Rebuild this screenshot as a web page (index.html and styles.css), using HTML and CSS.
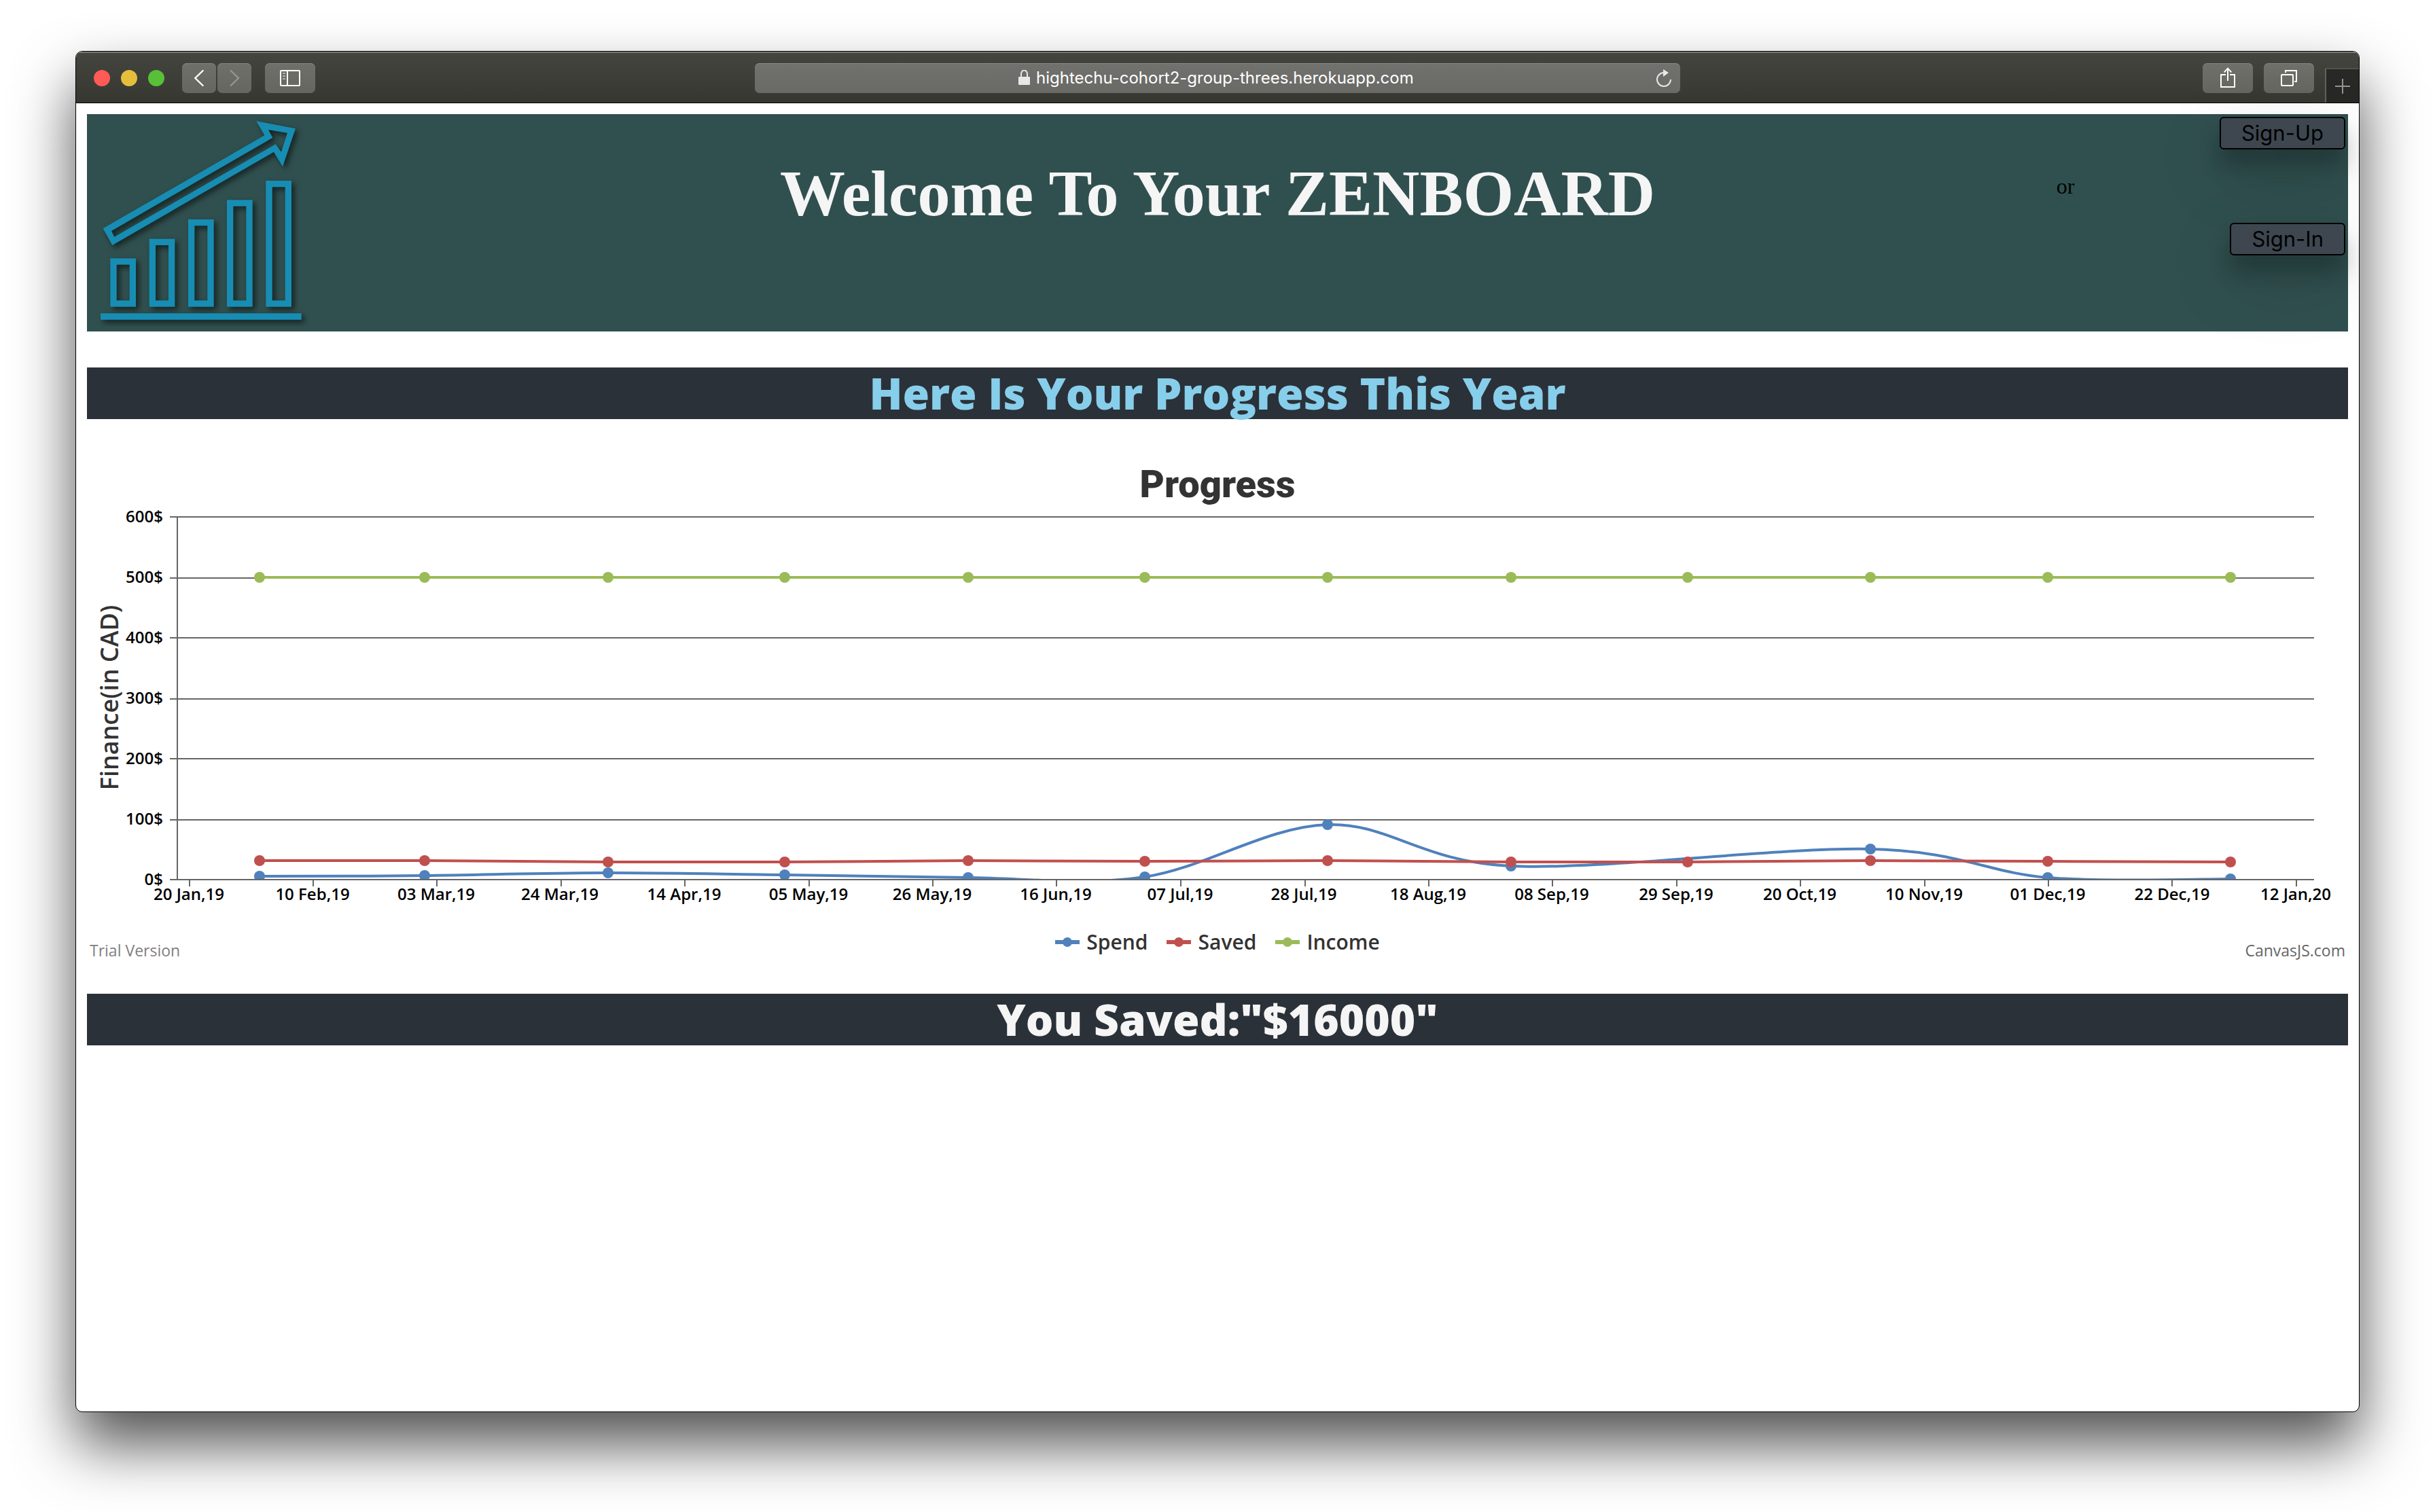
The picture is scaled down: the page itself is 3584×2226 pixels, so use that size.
FILE: index.html
```html
<!DOCTYPE html>
<html lang="en">
<head>
<meta charset="utf-8">
<title>Zenboard</title>
<link rel="stylesheet" href="styles.css">
</head>
<body>
<div class="window">
  <div class="toolbar">
    <div class="tools tools-left">
      <div class="lights">
        <button class="light light-close" aria-label="Close"></button>
        <button class="light light-min" aria-label="Minimise"></button>
        <button class="light light-full" aria-label="Full screen"></button>
      </div>
      <div class="nav">
        <button class="tool tool-nav" aria-label="Back"><svg width="50" height="44" viewBox="504 96 150 132"><path d="M596 129L562 162L596 195" fill="none" stroke="#fff" stroke-width="7" stroke-linecap="round"/></svg></button>
        <button class="tool tool-nav" aria-label="Forward"><svg width="50" height="44" viewBox="660 96 150 132"><path d="M719 129L753 162L719 195" fill="none" stroke="#969691" stroke-width="7" stroke-linecap="round"/></svg></button>
      </div>
      <button class="tool" aria-label="Show sidebar"><svg width="74" height="44" viewBox="870 96 222 132"><rect x="939" y="129" width="84" height="66" rx="3" fill="none" stroke="#fff" stroke-width="6"/><path d="M969 129V195" stroke="#fff" stroke-width="6"/><path d="M948 141H960M948 153H960M948 165H960" stroke="#c8c8c4" stroke-width="5"/></svg></button>
    </div>
    <div class="address">
      <label class="url">
        <svg width="17" height="24" viewBox="0 0 17 24"><path d="M4 12V6A4 5 0 0 1 13 6V12" fill="none" stroke="#e8e8e8" stroke-width="2"/><rect x="0" y="10" width="17" height="12" rx="1" fill="#e8e8e8"/></svg>
        <input class="url-input" type="text" aria-label="Address" value="hightechu-cohort2-group-threes.herokuapp.com">
      </label>
      <button class="reload" aria-label="Reload"><svg width="24" height="26" viewBox="0 0 24 26"><path d="M12 5A10 10 0 1 0 22 15" fill="none" stroke="#e8e8e8" stroke-width="2"/><path d="M11 0L19 5L11 11Z" fill="#e8e8e8"/></svg></button>
    </div>
    <div class="tools tools-right">
      <button class="tool" aria-label="Share"><svg width="74" height="44" viewBox="726 96 222 132"><path d="M828 147H807V201H867V147H846M837 174V120M821 136L837 119L853 136" fill="none" stroke="#fff" stroke-width="6"/></svg></button>
      <button class="tool" aria-label="Show tabs"><svg width="74" height="44" viewBox="996 96 222 132"><rect x="1074" y="147" width="51" height="48" rx="3" fill="none" stroke="#fff" stroke-width="6"/><path d="M1092 138V129H1140V177H1131" fill="none" stroke="#fff" stroke-width="6"/></svg></button>
      <button class="new-tab" aria-label="New tab"><svg width="22" height="22" viewBox="0 0 22 22"><path d="M11 0V22M0 11H22" stroke="#949494" stroke-width="2"/></svg></button>
    </div>
  </div>

  <main class="page">
    <header class="hero">
      <svg class="logo" width="320" height="320" viewBox="84 324 960 960" role="img" aria-label="Rising bar chart">
        <g fill="none" stroke="#178db3" stroke-width="28">
          <rect x="201" y="975" width="85" height="186"/>
          <rect x="373" y="889" width="85" height="272"/>
          <rect x="545" y="803" width="85" height="358"/>
          <rect x="716" y="717" width="85" height="444"/>
          <rect x="888" y="632" width="85" height="529"/>
          <path d="M144 1218H1031"/>
        </g>
        <path fill="#178db3" fill-rule="evenodd" d="M155 829L868 418L832 355L1005 388L948 556L909 491L196 903ZM192 840L205 866L917 457L942 491L969 407L885 393L904 428Z"/>
      </svg>
      <h1 class="hero-title">Welcome To Your ZENBOARD</h1>
      <div class="account">
        <button class="sign">Sign-Up</button>
        <p class="or">or</p>
        <button class="sign">Sign-In</button>
      </div>
    </header>

    <h2 class="band band-blue">Here Is Your Progress This Year</h2>

    <section class="chart">
      <h3 class="chart-title">Progress</h3>
      <svg class="plot" viewBox="128 745 3328 600" role="img" aria-label="Spend, saved and income by month">
        <defs><clipPath id="area"><rect x="261" y="750" width="3145" height="544"/></clipPath></defs>
        <path class="rule" d="M250 761H3406M250 851H3406M250 939H3406M250 1029H3406M250 1117H3406M250 1207H3406M261 761V1295"/>
        <g clip-path="url(#area)">
          <path class="line spend" d="M382 1290C422 1290 539 1290 625 1289C711 1288 807 1285 895 1285C983 1285 1067 1287 1155 1288C1243 1289 1337 1291 1425 1292C1513 1293 1597 1304 1685 1291C1773 1278 1864 1217 1954 1214C2044 1211 2091 1269 2224 1275C2357 1281 2621 1247 2753 1250C2885 1253 2926 1285 3014 1292C3102 1299 3243 1294 3283 1294"/>
          <g class="dot-spend"><circle cx="382" cy="1290" r="8"/><circle cx="625" cy="1289" r="8"/><circle cx="895" cy="1285" r="8"/><circle cx="1155" cy="1288" r="8"/><circle cx="1425" cy="1292" r="8"/><circle cx="1685" cy="1291" r="8"/><circle cx="1954" cy="1214" r="8"/><circle cx="2224" cy="1275" r="8"/><circle cx="2753" cy="1250" r="8"/><circle cx="3014" cy="1292" r="8"/><circle cx="3283" cy="1294" r="8"/></g>
          <path class="line saved" d="M382 1267H625L895 1269H1155L1425 1267L1685 1268L1954 1267L2224 1269H2484L2753 1267L3014 1268L3283 1269"/>
          <g class="dot-saved"><circle cx="382" cy="1267" r="8"/><circle cx="625" cy="1267" r="8"/><circle cx="895" cy="1269" r="8"/><circle cx="1155" cy="1269" r="8"/><circle cx="1425" cy="1267" r="8"/><circle cx="1685" cy="1268" r="8"/><circle cx="1954" cy="1267" r="8"/><circle cx="2224" cy="1269" r="8"/><circle cx="2484" cy="1269" r="8"/><circle cx="2753" cy="1267" r="8"/><circle cx="3014" cy="1268" r="8"/><circle cx="3283" cy="1269" r="8"/></g>
          <path class="line income" d="M382 850H3283"/>
          <g class="dot-income"><circle cx="382" cy="850" r="8"/><circle cx="625" cy="850" r="8"/><circle cx="895" cy="850" r="8"/><circle cx="1155" cy="850" r="8"/><circle cx="1425" cy="850" r="8"/><circle cx="1685" cy="850" r="8"/><circle cx="1954" cy="850" r="8"/><circle cx="2224" cy="850" r="8"/><circle cx="2484" cy="850" r="8"/><circle cx="2753" cy="850" r="8"/><circle cx="3014" cy="850" r="8"/><circle cx="3283" cy="850" r="8"/></g>
        </g>
        <path class="rule" d="M250 1295H3406M279 1295V1305M461 1295V1305M643 1295V1305M826 1295V1305M1008 1295V1305M1191 1295V1305M1373 1295V1305M1555 1295V1305M1738 1295V1305M1921 1295V1305M2103 1295V1305M2285 1295V1305M2468 1295V1305M2650 1295V1305M2833 1295V1305M3015 1295V1305M3197 1295V1305M3380 1295V1305"/>
        <g class="tick tick-y">
          <text x="240" y="769">600$</text><text x="240" y="858">500$</text><text x="240" y="947">400$</text><text x="240" y="1036">300$</text><text x="240" y="1125">200$</text><text x="240" y="1214">100$</text><text x="240" y="1303">0$</text>
        </g>
        <g class="tick tick-x">
          <text x="278" y="1325">20 Jan,19</text><text x="460" y="1325">10 Feb,19</text><text x="642" y="1325">03 Mar,19</text><text x="824" y="1325">24 Mar,19</text><text x="1007" y="1325">14 Apr,19</text><text x="1190" y="1325">05 May,19</text><text x="1372" y="1325">26 May,19</text><text x="1554" y="1325">16 Jun,19</text><text x="1737" y="1325">07 Jul,19</text><text x="1919" y="1325">28 Jul,19</text><text x="2102" y="1325">18 Aug,19</text><text x="2284" y="1325">08 Sep,19</text><text x="2467" y="1325">29 Sep,19</text><text x="2649" y="1325">20 Oct,19</text><text x="2832" y="1325">10 Nov,19</text><text x="3014" y="1325">01 Dec,19</text><text x="3197" y="1325">22 Dec,19</text><text x="3379" y="1325">12 Jan,20</text>
        </g>
        <text class="axis-title" transform="translate(174 1027) rotate(-90)">Finance(in CAD)</text>
      </svg>
      <div class="chart-foot">
        <span class="credit">Trial Version</span>
        <ul class="legend">
          <li class="key"><svg width="36" height="16" viewBox="0 0 36 16"><path class="key-line spend" d="M0 8H36"/><circle class="dot-spend" cx="18" cy="8" r="7"/></svg>Spend</li>
          <li class="key"><svg width="36" height="16" viewBox="0 0 36 16"><path class="key-line saved" d="M0 8H36"/><circle class="dot-saved" cx="18" cy="8" r="7"/></svg>Saved</li>
          <li class="key"><svg width="36" height="16" viewBox="0 0 36 16"><path class="key-line income" d="M0 8H36"/><circle class="dot-income" cx="18" cy="8" r="7"/></svg>Income</li>
        </ul>
        <a class="credit credit-link" href="#">CanvasJS.com</a>
      </div>
    </section>

    <h2 class="band band-white">You Saved:"$16000"</h2>
  </main>
</div>
</body>
</html>
```

FILE: styles.css
```css
* { box-sizing: border-box; }

body {
  margin: 0;
  padding: 75px 111px 147px;
  background: #fff;
  font-family: "Liberation Serif", "Times New Roman", serif;
  font-size: 32px;
}

button {
  margin: 0;
  padding: 0;
  border: 0;
  background: none;
}

svg { display: block; }

h1, h2, h3, p, ul { margin: 0; padding: 0; }

/* Browser window */
.window {
  min-height: calc(100vh - 222px);
  border: 1px solid #000;
  border-radius: 10px;
  background: #fff;
  overflow: hidden;
  box-shadow: 0 48px 88px rgba(0, 0, 0, 0.68);
}

.toolbar {
  display: grid;
  grid-template-columns: 999fr 1362fr 999fr;
  align-items: center;
  height: 76px;
  border-top: 2px solid #777771;
  border-bottom: 1px solid #000;
  background: linear-gradient(#454540, #373732);
}

.tools { display: flex; align-items: center; height: 100%; }
.tools-left { gap: 20px; padding-left: 26px; }
.tools-right { justify-content: flex-end; gap: 16px; }
.lights { display: flex; gap: 16px; margin-right: 6px; }

.light { width: 24px; height: 24px; border-radius: 50%; }
.light-close { background: #fe5b57; }
.light-min { background: #e5bf3c; }
.light-full { background: #58c038; }

.nav { display: flex; gap: 2px; }

.tool {
  height: 44px;
  border-radius: 7px;
  background: linear-gradient(#70706b, #666661);
  box-shadow: inset 0 1px #858580;
}

.address {
  display: grid;
  grid-template-columns: 1fr auto 1fr;
  align-items: center;
  height: 44px;
  border-radius: 7px;
  background: linear-gradient(#71716d, #696966);
  box-shadow: inset 0 1px #8a8a86;
}

.url { grid-column: 2; display: flex; align-items: center; gap: 9px; }

.url-input {
  width: 560px;
  padding: 0;
  border: 0;
  background: none;
  color: #fff;
  font: 24px/32px Inter, sans-serif;
}

.reload { justify-self: end; margin-right: 12px; }

.new-tab {
  display: grid;
  place-items: center;
  align-self: flex-end;
  width: 50px;
  height: 51px;
  border-top: 2px solid #51514d;
  border-left: 2px solid #61615e;
  background: #282826;
}

/* Page */
.page { padding: 16px; }

.hero {
  display: grid;
  grid-template-columns: 1fr 2fr 1fr;
  background: #30504f;
}

.logo { filter: drop-shadow(4px 4px 4px rgba(0, 0, 0, 0.6)); }

.hero-title {
  padding-top: 62px;
  color: #f5f5f5;
  font-size: 96px;
  line-height: 110px;
  text-align: center;
  white-space: nowrap;
}

.account {
  display: flex;
  flex-direction: column;
  align-items: flex-end;
  gap: 36px;
  padding: 4px;
}

.sign {
  height: 48px;
  padding: 0 30px;
  border: 2px solid #000;
  border-radius: 6px;
  background: #3e4750;
  color: #000;
  font: 31px/40px Inter, sans-serif;
  box-shadow: 0 24px 32px rgba(0, 0, 0, 0.24), 0 34px 100px rgba(0, 0, 0, 0.19);
}

.or { align-self: center; line-height: 36px; }

.band {
  background: #2b3138;
  font: 800 64px/76px "Open Sans", sans-serif;
  text-align: center;
}

.band-blue { margin-top: 53px; color: #87ceeb; }
.band-white { margin-top: 48px; color: #f5f5f5; }

/* Chart */
.chart { padding-top: 64px; font-family: "Open Sans", sans-serif; }

.chart-title {
  color: #333;
  font: 900 56px/64px Roboto, sans-serif;
  text-align: center;
}

.plot { width: 100%; }
.rule { fill: none; stroke: #666; stroke-width: 2; shape-rendering: crispEdges; }
.line { fill: none; stroke-width: 4; }
.key-line { stroke-width: 6; }
.spend { stroke: #4f81bc; }
.saved { stroke: #c0504e; }
.income { stroke: #9bbb58; }
.dot-spend { fill: #4f81bc; }
.dot-saved { fill: #c0504e; }
.dot-income { fill: #9bbb58; }

.tick { font-size: 24px; font-weight: 600; fill: #000; }
.tick-y { text-anchor: end; }
.tick-x { text-anchor: middle; }
.axis-title { font-size: 36px; font-weight: 600; fill: #333; text-anchor: middle; }

.chart-foot {
  display: grid;
  grid-template-columns: 1fr auto 1fr;
  align-items: end;
  padding: 22px 4px 0;
}

.legend {
  display: flex;
  gap: 28px;
  padding-bottom: 8px;
  color: #333;
  font-size: 30px;
  font-weight: 600;
  line-height: 40px;
  list-style: none;
}

.key { display: flex; align-items: center; gap: 10px; }

.credit { color: #808080; font-size: 23px; line-height: 32px; }
.credit-link { justify-self: end; color: #666; text-decoration: none; }
```
